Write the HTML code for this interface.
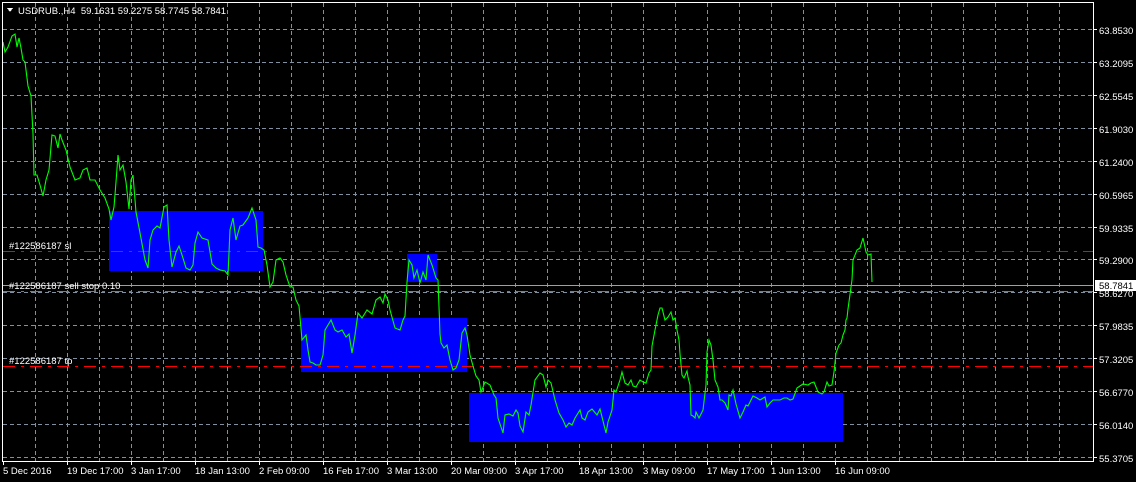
<!DOCTYPE html>
<html><head><meta charset="utf-8"><style>
html,body{margin:0;padding:0;background:#000;width:1136px;height:482px;overflow:hidden}
svg{display:block}
text{font-family:"Liberation Sans",sans-serif;font-size:9.5px;fill:#fff}
</style></head><body>
<svg width="1136" height="482" viewBox="0 0 1136 482" shape-rendering="crispEdges">
<rect width="1136" height="482" fill="#000"/>
<g stroke="#8090a0" stroke-width="1" stroke-dasharray="4,3">
<line x1="35.5" y1="3" x2="35.5" y2="461"/><line x1="67.5" y1="3" x2="67.5" y2="461"/><line x1="99.5" y1="3" x2="99.5" y2="461"/><line x1="131.5" y1="3" x2="131.5" y2="461"/><line x1="163.5" y1="3" x2="163.5" y2="461"/><line x1="195.5" y1="3" x2="195.5" y2="461"/><line x1="227.5" y1="3" x2="227.5" y2="461"/><line x1="259.5" y1="3" x2="259.5" y2="461"/><line x1="291.5" y1="3" x2="291.5" y2="461"/><line x1="323.5" y1="3" x2="323.5" y2="461"/><line x1="355.5" y1="3" x2="355.5" y2="461"/><line x1="387.5" y1="3" x2="387.5" y2="461"/><line x1="419.5" y1="3" x2="419.5" y2="461"/><line x1="451.5" y1="3" x2="451.5" y2="461"/><line x1="483.5" y1="3" x2="483.5" y2="461"/><line x1="515.5" y1="3" x2="515.5" y2="461"/><line x1="547.5" y1="3" x2="547.5" y2="461"/><line x1="579.5" y1="3" x2="579.5" y2="461"/><line x1="611.5" y1="3" x2="611.5" y2="461"/><line x1="643.5" y1="3" x2="643.5" y2="461"/><line x1="675.5" y1="3" x2="675.5" y2="461"/><line x1="707.5" y1="3" x2="707.5" y2="461"/><line x1="739.5" y1="3" x2="739.5" y2="461"/><line x1="771.5" y1="3" x2="771.5" y2="461"/><line x1="803.5" y1="3" x2="803.5" y2="461"/><line x1="835.5" y1="3" x2="835.5" y2="461"/><line x1="867.5" y1="3" x2="867.5" y2="461"/><line x1="899.5" y1="3" x2="899.5" y2="461"/><line x1="931.5" y1="3" x2="931.5" y2="461"/><line x1="963.5" y1="3" x2="963.5" y2="461"/><line x1="995.5" y1="3" x2="995.5" y2="461"/><line x1="1027.5" y1="3" x2="1027.5" y2="461"/><line x1="1059.5" y1="3" x2="1059.5" y2="461"/>
<line x1="3" y1="29.5" x2="1093" y2="29.5"/><line x1="3" y1="62.5" x2="1093" y2="62.5"/><line x1="3" y1="95.5" x2="1093" y2="95.5"/><line x1="3" y1="128.5" x2="1093" y2="128.5"/><line x1="3" y1="161.5" x2="1093" y2="161.5"/><line x1="3" y1="194.5" x2="1093" y2="194.5"/><line x1="3" y1="227.5" x2="1093" y2="227.5"/><line x1="3" y1="259.5" x2="1093" y2="259.5"/><line x1="3" y1="292.5" x2="1093" y2="292.5"/><line x1="3" y1="325.5" x2="1093" y2="325.5"/><line x1="3" y1="358.5" x2="1093" y2="358.5"/><line x1="3" y1="391.5" x2="1093" y2="391.5"/><line x1="3" y1="424.5" x2="1093" y2="424.5"/><line x1="3" y1="457.5" x2="1093" y2="457.5"/>
</g>
<g fill="#0000ff">
<rect x="109" y="211" width="154" height="60"/>
<rect x="301" y="318" width="166" height="54"/>
<rect x="407" y="254" width="30" height="28"/>
<rect x="469" y="393" width="374" height="49"/>
</g>
<line x1="3" y1="251.5" x2="1093" y2="251.5" stroke="#ff0000" stroke-width="1" stroke-dasharray="12,6,3,6"/>
<line x1="3" y1="366.5" x2="1093" y2="366.5" stroke="#ff0000" stroke-width="1" stroke-dasharray="12,6,3,6"/>
<line x1="3" y1="291.5" x2="1093" y2="291.5" stroke="#22bb22" stroke-dasharray="12,6,3,6"/>
<line x1="3" y1="285.5" x2="1093" y2="285.5" stroke="#a0a0a0"/>
<polyline fill="none" stroke="#00ff00" stroke-width="1.1" shape-rendering="auto" points="3,42 5,52 8,47 12,36 15,34 17,47 19,38 21,48 23,60 25,62 28,86 31,96 33,134 34,175 37,175 40,185 43,196 46,180 49,170 52,135 55,136 58,148 60,134 62,140 66,150 70,167 75,180 80,178 83,170 87,168 90,180 95,180 100,190 105,198 109,209 111,220 114,207 116,182 118,155 120,170 123,165 126,182 129,209 131,180 133,175 136,212 140,233 145,260 148,268 150,240 153,230 157,226 160,228 164,207 167,205 169,240 172,267 176,252 179,246 182,255 186,268 190,270 193,265 195,243 198,232 202,238 208,240 212,264 216,268 220,270 225,271 228,275 230,230 233,218 236,240 240,226 243,225 248,218 252,208 256,220 258,247 261,248 264,250 267,265 270,287 273,282 276,260 280,258 283,262 286,275 290,287 293,287 296,300 299,306 302,340 306,335 308,350 310,362 313,363 316,365 320,365 323,355 325,330 328,325 331,320 335,330 338,332 342,330 346,337 349,334 352,353 355,335 358,313 362,318 367,310 372,314 376,300 380,297 383,303 385,294 388,300 390,310 395,328 400,330 403,320 405,316 407,282 409,260 412,265 414,278 417,270 420,283 423,272 426,280 428,255 432,265 436,278 438,280 440,334 441,343 444,348 447,345 450,360 453,370 456,368 459,360 462,333 465,328 467,335 470,355 473,366 476,376 479,380 481,392 482,390 485,382 490,385 494,395 496,398 498,418 501,427 503,433 505,415 509,414 513,416 516,410 518,413 520,426 523,432 526,412 529,415 531,405 535,380 540,373 543,375 546,387 548,380 551,383 555,400 559,413 563,420 566,427 569,423 572,425 575,418 580,410 582,418 585,420 588,412 592,409 597,415 600,409 603,421 606,433 608,422 612,410 614,390 616,392 620,380 622,372 625,383 628,385 631,380 633,386 636,387 640,380 643,382 646,383 649,373 651,370 652,346 655,330 657,320 658,315 660,308 662,308 665,320 668,317 671,312 673,320 675,318 677,330 679,340 680,354 682,375 684,378 687,371 688,377 690,385 691,415 693,416 695,418 696,412 699,418 703,410 706,385 707,352 709,340 711,345 713,360 715,380 718,387 720,400 722,400 725,403 728,410 729,395 731,396 733,390 736,404 740,418 743,412 746,405 748,406 753,396 757,398 760,400 765,397 767,407 770,403 773,400 777,400 780,400 784,398 787,398 790,400 793,399 797,388 800,386 803,384 808,385 811,383 814,382 818,392 822,394 824,392 827,382 829,386 832,385 834,372 836,353 839,345 841,343 843,335 845,330 846,320 847,318 848,309 852,280 853,260 857,250 860,248 863,238 866,252 868,255 871,254 872,282"/>
<g stroke="#fff" fill="none">
<line x1="2.5" y1="2" x2="2.5" y2="462"/>
<line x1="2" y1="2.5" x2="1094" y2="2.5"/>
<line x1="1093.5" y1="2" x2="1093.5" y2="462"/>
<line x1="2" y1="461.5" x2="1094" y2="461.5"/>
</g>
<g stroke="#fff"><line x1="3.5" y1="461" x2="3.5" y2="465"/><line x1="67.5" y1="461" x2="67.5" y2="465"/><line x1="131.5" y1="461" x2="131.5" y2="465"/><line x1="195.5" y1="461" x2="195.5" y2="465"/><line x1="259.5" y1="461" x2="259.5" y2="465"/><line x1="323.5" y1="461" x2="323.5" y2="465"/><line x1="387.5" y1="461" x2="387.5" y2="465"/><line x1="451.5" y1="461" x2="451.5" y2="465"/><line x1="515.5" y1="461" x2="515.5" y2="465"/><line x1="579.5" y1="461" x2="579.5" y2="465"/><line x1="643.5" y1="461" x2="643.5" y2="465"/><line x1="707.5" y1="461" x2="707.5" y2="465"/><line x1="771.5" y1="461" x2="771.5" y2="465"/><line x1="835.5" y1="461" x2="835.5" y2="465"/>
<line x1="1093" y1="29.5" x2="1097" y2="29.5"/><line x1="1093" y1="62.5" x2="1097" y2="62.5"/><line x1="1093" y1="95.5" x2="1097" y2="95.5"/><line x1="1093" y1="128.5" x2="1097" y2="128.5"/><line x1="1093" y1="161.5" x2="1097" y2="161.5"/><line x1="1093" y1="194.5" x2="1097" y2="194.5"/><line x1="1093" y1="227.5" x2="1097" y2="227.5"/><line x1="1093" y1="259.5" x2="1097" y2="259.5"/><line x1="1093" y1="292.5" x2="1097" y2="292.5"/><line x1="1093" y1="325.5" x2="1097" y2="325.5"/><line x1="1093" y1="358.5" x2="1097" y2="358.5"/><line x1="1093" y1="391.5" x2="1097" y2="391.5"/><line x1="1093" y1="424.5" x2="1097" y2="424.5"/><line x1="1093" y1="457.5" x2="1097" y2="457.5"/></g>
<polygon points="7,8 13,8 10,12" fill="#fff"/>
<text x="18" y="14" xml:space="preserve">USDRUB.,H4  59.1631 59.2275 58.7745 58.7841</text>
<text x="9" y="249">#122586187 sl</text>
<text x="9" y="289">#122586187 sell stop 0.10</text>
<text x="9" y="364">#122586187 tp</text>
<g>
<text x="1099" y="34">63.8530</text><text x="1099" y="67">63.2095</text><text x="1099" y="100">62.5545</text><text x="1099" y="133">61.9030</text><text x="1099" y="166">61.2400</text><text x="1099" y="199">60.5965</text><text x="1099" y="232">59.9335</text><text x="1099" y="264">59.2900</text><text x="1099" y="297">58.6270</text><text x="1099" y="330">57.9835</text><text x="1099" y="363">57.3205</text><text x="1099" y="396">56.6770</text><text x="1099" y="429">56.0140</text><text x="1099" y="462">55.3705</text>
</g>
<rect x="1095" y="280" width="41" height="11" fill="#fff"/>
<text x="1099" y="289" style="fill:#000">58.7841</text>
<g>
<text x="3" y="474">5 Dec 2016</text><text x="67" y="474">19 Dec 17:00</text><text x="131" y="474">3 Jan 17:00</text><text x="195" y="474">18 Jan 13:00</text><text x="259" y="474">2 Feb 09:00</text><text x="323" y="474">16 Feb 17:00</text><text x="387" y="474">3 Mar 13:00</text><text x="451" y="474">20 Mar 09:00</text><text x="515" y="474">3 Apr 17:00</text><text x="579" y="474">18 Apr 13:00</text><text x="643" y="474">3 May 09:00</text><text x="707" y="474">17 May 17:00</text><text x="771" y="474">1 Jun 13:00</text><text x="835" y="474">16 Jun 09:00</text>
</g>
</svg>
</body></html>
